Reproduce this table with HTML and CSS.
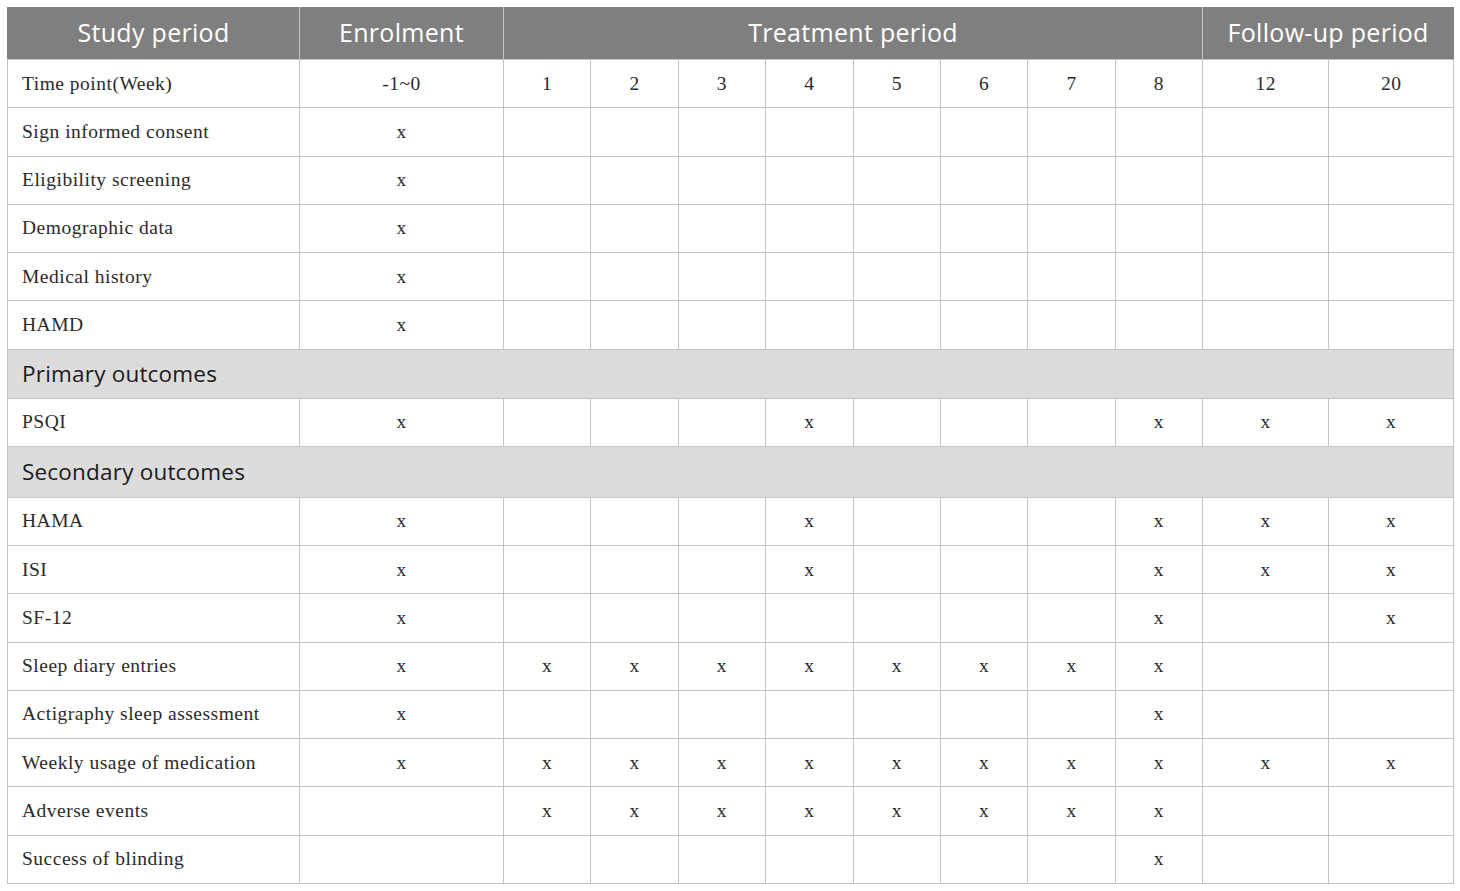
FILE: index.html
```html
<!DOCTYPE html>
<html>
<head>
<meta charset="utf-8">
<link rel="stylesheet" href="styles.css">
</head>
<body>
<table class="schedule">
  <colgroup>
    <col class="c-label"><col class="c-enrol">
    <col class="c-wk"><col class="c-wk"><col class="c-wk"><col class="c-wk">
    <col class="c-wk"><col class="c-wk"><col class="c-wk"><col class="c-wk">
    <col class="c-f12"><col class="c-f20">
  </colgroup>
  <thead>
    <tr class="head">
      <th>Study period</th>
      <th>Enrolment</th>
      <th colspan="8">Treatment period</th>
      <th colspan="2">Follow-up period</th>
    </tr>
  </thead>
  <tbody>
    <tr><td class="lbl">Time point(Week)</td><td>-1~0</td><td>1</td><td>2</td><td>3</td><td>4</td><td>5</td><td>6</td><td>7</td><td>8</td><td>12</td><td>20</td></tr>
    <tr><td class="lbl">Sign informed consent</td><td>x</td><td></td><td></td><td></td><td></td><td></td><td></td><td></td><td></td><td></td><td></td></tr>
    <tr><td class="lbl">Eligibility screening</td><td>x</td><td></td><td></td><td></td><td></td><td></td><td></td><td></td><td></td><td></td><td></td></tr>
    <tr><td class="lbl">Demographic data</td><td>x</td><td></td><td></td><td></td><td></td><td></td><td></td><td></td><td></td><td></td><td></td></tr>
    <tr><td class="lbl">Medical history</td><td>x</td><td></td><td></td><td></td><td></td><td></td><td></td><td></td><td></td><td></td><td></td></tr>
    <tr><td class="lbl">HAMD</td><td>x</td><td></td><td></td><td></td><td></td><td></td><td></td><td></td><td></td><td></td><td></td></tr>
    <tr class="section"><td colspan="12">Primary outcomes</td></tr>
    <tr><td class="lbl">PSQI</td><td>x</td><td></td><td></td><td></td><td>x</td><td></td><td></td><td></td><td>x</td><td>x</td><td>x</td></tr>
    <tr class="section sec2"><td colspan="12">Secondary outcomes</td></tr>
    <tr><td class="lbl">HAMA</td><td>x</td><td></td><td></td><td></td><td>x</td><td></td><td></td><td></td><td>x</td><td>x</td><td>x</td></tr>
    <tr><td class="lbl">ISI</td><td>x</td><td></td><td></td><td></td><td>x</td><td></td><td></td><td></td><td>x</td><td>x</td><td>x</td></tr>
    <tr><td class="lbl">SF-12</td><td>x</td><td></td><td></td><td></td><td></td><td></td><td></td><td></td><td>x</td><td></td><td>x</td></tr>
    <tr><td class="lbl">Sleep diary entries</td><td>x</td><td>x</td><td>x</td><td>x</td><td>x</td><td>x</td><td>x</td><td>x</td><td>x</td><td></td><td></td></tr>
    <tr><td class="lbl">Actigraphy sleep assessment</td><td>x</td><td></td><td></td><td></td><td></td><td></td><td></td><td></td><td>x</td><td></td><td></td></tr>
    <tr><td class="lbl">Weekly usage of medication</td><td>x</td><td>x</td><td>x</td><td>x</td><td>x</td><td>x</td><td>x</td><td>x</td><td>x</td><td>x</td><td>x</td></tr>
    <tr><td class="lbl">Adverse events</td><td></td><td>x</td><td>x</td><td>x</td><td>x</td><td>x</td><td>x</td><td>x</td><td>x</td><td></td><td></td></tr>
    <tr><td class="lbl">Success of blinding</td><td></td><td></td><td></td><td></td><td></td><td></td><td></td><td></td><td>x</td><td></td><td></td></tr>
  </tbody>
</table>
</body>
</html>
```
FILE: styles.css
```css
html, body {
  margin: 0;
  padding: 0;
  background: #ffffff;
}
body {
  padding: 7px 0 0 7px;
}
.schedule {
  border-collapse: collapse;
  table-layout: fixed;
  width: 1446px;
  font-family: "Liberation Serif", "Times New Roman", serif;
  font-size: 19.5px;
  letter-spacing: 0.5px;
  color: #2a2a2a;
}
.c-label { width: 292px; }
.c-enrol { width: 204px; }
.c-wk { width: 87.4px; }
.c-f12 { width: 126px; }
.c-f20 { width: 125px; }
.schedule td, .schedule th {
  border: 1px solid #c3c3c3;
  text-align: center;
  padding: 0;
  height: 47.25px;
}
.head th {
  background: #7f7f7f;
  color: #ffffff;
  font-family: "Open Sans", "Noto Sans", sans-serif;
  font-weight: 400;
  font-size: 25px;
  letter-spacing: 0.3px;
  height: 48px;
  padding-bottom: 3px;
  border-top-color: #7f7f7f;
  border-left-color: #7f7f7f;
  border-right-color: #c3c3c3;
}
.head th:first-child { border-left-color: #7f7f7f; }
.head th:last-child { border-right-color: #7f7f7f; }
.schedule td.lbl {
  text-align: left;
  padding-left: 14px;
}
.section td {
  background: #dcdcdc;
  text-align: left;
  padding-left: 14px;
  font-family: "Open Sans", "Noto Sans", sans-serif;
  font-size: 22.5px;
  letter-spacing: 0.2px;
  color: #1a1a1a;
  height: 48px;
}
.sec2 td { height: 50px; }
```
